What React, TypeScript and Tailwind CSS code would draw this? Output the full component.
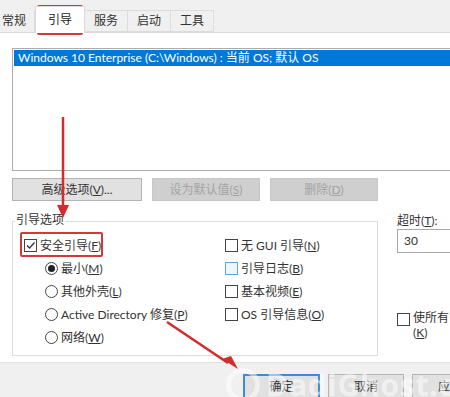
import React from 'react';

const font = { fontFamily: '"Lato", "Noto Sans CJK SC", sans-serif' };

const Tab = ({ label, active }: { label: string; active?: boolean }) => (
  <div
    className={
      active
        ? 'h-[27px] px-[12px] flex items-center bg-white border border-b-0 border-[#d9d9d9] text-[#222] -mb-px relative z-10'
        : 'h-[22px] px-[9px] flex items-center border border-l-0 border-[#dcdcdc] bg-[#f0f0f0] text-[#333]'
    }
  >
    {label}
  </div>
);

const CheckBox = ({ checked, blue }: { checked?: boolean; blue?: boolean }) => (
  <span
    className={`w-[13px] h-[13px] border flex items-center justify-center shrink-0 ${
      blue ? 'border-[#62a3d8] bg-[#eef6fc]' : 'border-[#444] bg-white'
    }`}
  >
    {checked && (
      <svg width="11" height="11" viewBox="0 0 11 11">
        <path d="M2 5.5 L4.5 8 L9.5 2.5" fill="none" stroke="#333" strokeWidth="1.3" />
      </svg>
    )}
  </span>
);

const Radio = ({ checked }: { checked?: boolean }) => (
  <span className="w-[13px] h-[13px] rounded-full border border-[#444] flex items-center justify-center bg-white shrink-0">
    {checked && <span className="w-[7px] h-[7px] rounded-full bg-[#222]" />}
  </span>
);

const Check = ({ label, checked, blue }: { label: React.ReactNode; checked?: boolean; blue?: boolean }) => (
  <div className="flex items-center gap-[3px] h-[23px] whitespace-nowrap">
    <CheckBox checked={checked} blue={blue} />
    <span>{label}</span>
  </div>
);

const Opt = ({ label, checked }: { label: React.ReactNode; checked?: boolean }) => (
  <div className="flex items-center gap-[3px] h-[23px] whitespace-nowrap">
    <Radio checked={checked} />
    <span>{label}</span>
  </div>
);

const Btn = ({ children, disabled, w }: { children: React.ReactNode; disabled?: boolean; w: string }) => (
  <div
    className={`${w} h-[23px] flex items-center justify-center border ${
      disabled ? 'bg-[#cfcfcf] border-[#c6c6c6] text-[#a3a3a3]' : 'bg-[#e1e1e1] border-[#b4b4b4] text-[#333]'
    }`}
  >
    {children}
  </div>
);

export default function App() {
  return (
    <div className="w-[450px] h-[397px] bg-white relative overflow-hidden text-[12px] text-[#333] flex flex-col" style={font}>
      {/* tabs */}
      <div className="h-[33px] bg-[#f0f0f0] flex items-end border-b border-[#d9d9d9] shrink-0">
        <div className="h-[22px] pl-[2px] pr-[8px] flex items-center border-r border-[#dcdcdc] text-[#333]">常规</div>
        <Tab label="引导" active />
        <Tab label="服务" />
        <Tab label="启动" />
        <Tab label="工具" />
      </div>

      {/* content */}
      <div className="flex-1 pl-[12px] pt-[15px] flex flex-col">
        <div className="w-[445px] h-[123px] border border-[#acacac] border-r-0 bg-white p-px">
          <div className="h-[16px] bg-[#0078d7] text-white pl-[4px] flex items-center whitespace-nowrap">
            Windows 10 Enterprise (C:\Windows) : 当前 OS; 默认 OS
          </div>
        </div>

        <div className="flex gap-[10px] mt-[7px]">
          <Btn w="w-[130px]">高级选项(<u>V</u>)...</Btn>
          <Btn w="w-[108px]" disabled>设为默认值(<u>S</u>)</Btn>
          <Btn w="w-[108px]" disabled>删除(<u>D</u>)</Btn>
        </div>

        <div className="flex mt-[13px]">
          <div className="w-[366px] shrink-0 relative pt-[7px]">
            <div className="absolute left-[3px] top-[-3px] bg-white px-px text-[#333]">引导选项</div>
            <div className="border border-[#dcdcdc] h-[135px] pl-[11px] pt-[12px] flex">
              <div className="w-[201px] shrink-0 flex flex-col">
                <Check label={<>安全引导(<u>F</u>)</>} checked />
                <div className="pl-[21px] flex flex-col">
                  <Opt label={<>最小(<u>M</u>)</>} checked />
                  <Opt label={<>其他外壳(<u>L</u>)</>} />
                  <Opt label={<>Active Directory 修复(<u>P</u>)</>} />
                  <Opt label={<>网络(<u>W</u>)</>} />
                </div>
              </div>
              <div className="flex flex-col">
                <Check label={<>无 GUI 引导(<u>N</u>)</>} />
                <Check label={<>引导日志(<u>B</u>)</>} blue />
                <Check label={<>基本视频(<u>E</u>)</>} />
                <Check label={<>OS 引导信息(<u>O</u>)</>} />
              </div>
            </div>
          </div>

          <div className="ml-[19px] flex flex-col shrink-0">
            <div className="h-[14px] flex items-center">超时(<u>T</u>):</div>
            <div className="w-[80px] h-[24px] border border-[#a8a8a8] mt-[1px] pl-[6px] flex items-center">30</div>
            <div className="flex items-start gap-[3px] mt-[57px]">
              <span className="mt-[3px]"><CheckBox /></span>
              <div className="leading-[15px]">
                <div className="whitespace-nowrap">使所有引</div>
                <div>(<u>K</u>)</div>
              </div>
            </div>
          </div>
        </div>
      </div>

      {/* bottom bar */}
      <div className="h-[35px] bg-[#f0f0f0] border-t border-[#e3e3e3] flex items-start pt-[11px] pl-[243px] gap-[8px] shrink-0">
        <div className="w-[77px] h-[26px] border-2 border-[#3f8ad0] bg-[#e1e1e1] flex items-center justify-center shrink-0">确定</div>
        <div className="w-[76px] h-[26px] border border-[#b4b4b4] bg-[#e1e1e1] flex items-center justify-center shrink-0">取消</div>
        <div className="w-[76px] h-[26px] border border-[#b4b4b4] bg-[#e1e1e1] flex items-center justify-center shrink-0">应用</div>
      </div>

      {/* watermark */}
      <div className="absolute left-[226px] top-[362px] flex items-center gap-[6px] pointer-events-none">
        <span className="w-[34px] h-[34px] rounded-full border-[5px] border-white/50" />
        <span className="text-[30px] font-bold text-white/50 tracking-wide whitespace-nowrap" style={{ fontFamily: '"Open Sans", sans-serif' }}>
          DadiGhost.com
        </span>
      </div>

      {/* annotations */}
      <div className="absolute left-[37px] top-[5px] w-[46px] h-[30px] border-2 border-[#d23a3a] rounded-[2px]" />
      <div className="absolute left-[20px] top-[232px] w-[83px] h-[25px] border-2 border-[#d23a3a] rounded-[2px]" />
      <svg className="absolute left-0 top-0 pointer-events-none" width="450" height="397">
        <line x1="63" y1="117" x2="63" y2="207" stroke="#d42b2b" strokeWidth="2.5" />
        <polygon points="57,205 69,205 63,218" fill="#d42b2b" />
        <line x1="167" y1="322" x2="228" y2="363" stroke="#d42b2b" strokeWidth="2.5" />
        <polygon points="222,359 238,369 231,356" fill="#d42b2b" />
      </svg>
    </div>
  );
}
